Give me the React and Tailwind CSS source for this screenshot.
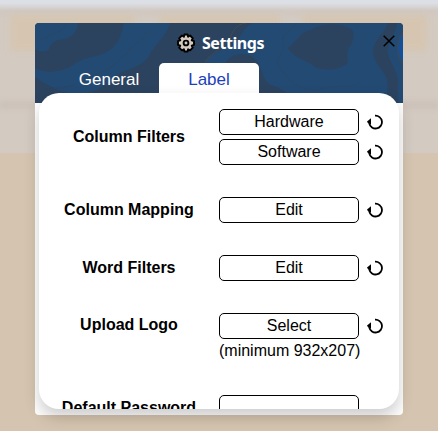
import React from "react";

function Contours() {
  return (
    <svg className="absolute inset-0 h-full w-full" viewBox="0 0 368 80" preserveAspectRatio="none" aria-hidden="true">
      <rect width="368" height="80" fill="#2b435f" />
      <g fill="#234a73">
        <path d="M0 0H43C42 9 37 15 29 16C20 17 16 19 14 26C11 30 5 28 0 27Z" />
        <path d="M89 0H135C132 12 122 20 116 29C111 40 103 43 92 47C79 51 75 61 61 67C41 77 17 66 0 54V45C12 52 29 48 38 42C51 32 64 35 75 27C86 18 86 11 89 0Z" />
        <path d="M170 40C176 31 184 27 195 24C206 20 204 8 217 0H353C350 10 338 17 338 29C338 39 347 45 351 54C355 63 350 72 352 80H255C258 70 245 65 234 61C226 55 228 43 220 36C212 28 196 30 190 40Z" />
        <path d="M362 0H368V80H364C361 74 365 63 362 52C359 42 352 36 353 26C354 16 362 10 362 0Z" />
      </g>
      <path d="M253 25C263 18 264 9 276 7C287 0 306 0 316 6C322 11 317 20 313 27C310 33 316 39 310 42C300 48 288 47 280 44C273 37 259 36 253 25Z" fill="#2b435f" />
      <g fill="none" stroke="#2b4763" strokeWidth="0.7">
        <path d="M263 0C254 9 246 10 248 20C250 33 236 36 246 46C254 56 259 66 280 67C299 62 311 65 325 60" />
        <path d="M3 18C14 11 26 11 32 0M4 62C28 73 52 55 67 49C87 41 95 21 115 9" />
      </g>
      <path d="M368 10C361 18 362 33 368 40Z" fill="#12509a" />
      <g fill="none" stroke="#49494b">
        <path d="M368 9C361 18 361 33 368 41M170 39C177 29 189 25 195 16C197 8 202 1 211 0" />
      </g>
    </svg>
  );
}

function Gear() {
  return (
    <svg className="h-5 w-5" viewBox="0 0 20 20" aria-hidden="true">
      <path
        d="M8.4 1.5h3.2l.5 2.2 2-1.2 2.8 2.8-1.2 2 2.3.8v3.8l-2.3.7 1.1 2.1-2.7 2.7-2-1.1-.5 2.2H8.4l-.5-2.2-2 1.1-2.7-2.7 1.1-2.1L2 11.9V8.1l2.3-.8-1.2-2 2.8-2.8 2 1.2Z"
        fill="#d4cac0"
        stroke="#000"
        strokeWidth="1.9"
        strokeLinejoin="round"
      />
      <circle cx="10" cy="10" r="2.4" fill="#d4cac0" stroke="#000" strokeWidth="1.9" />
    </svg>
  );
}

function ResetButton() {
  return (
    <button aria-label="Reset" className="h-4 w-4">
      <svg className="h-4 w-4" viewBox="0 0 16 16" aria-hidden="true">
        <path d="M8 1.7A6.4 6.4 0 1 1 2.3 9.5" fill="none" stroke="#000" strokeWidth="1.8" />
        <path d="M0 7.6L4 4.2V10.4L1.2 9.4Z" />
      </svg>
    </button>
  );
}

function Option({ label }) {
  return (
    <div className="flex items-center gap-2">
      <button className="h-[26px] w-[140px] rounded-[5px] border border-black leading-6">{label}</button>
      {label && <ResetButton />}
    </div>
  );
}

function Row({ title, options, note }) {
  return (
    <div className={note ? "flex items-start gap-4" : "flex items-center gap-4"}>
      <div className="w-[148px] shrink-0 text-center leading-6 font-bold whitespace-nowrap">{title}</div>
      <div className="flex flex-col gap-1">
        {options.map((o) => (
          <Option key={o} label={o} />
        ))}
        {note && <div className="-mt-1 h-6 leading-6 whitespace-nowrap">{note}</div>}
      </div>
    </div>
  );
}

export default function App() {
  return (
    <div className="relative h-[431px] w-[438px] overflow-hidden bg-[#d5c5b0] px-[35px] pt-[23px] font-['Liberation_Sans',Arial,sans-serif] text-base text-black">
      <div className="absolute inset-x-0 top-0 h-[153px] bg-linear-to-b from-[#dcdfe5] from-2% via-[#d0c8c1] via-7% to-[#d3cac1] to-12%">
        <div className="absolute top-[15px] left-[10px] h-[36px] w-[125px] bg-[#d6c5ae] opacity-80 blur-[3px]" />
        <div className="absolute top-[15px] right-[11px] h-[36px] w-[125px] bg-[#d6c5ae] opacity-80 blur-[3px]" />
        <div className="absolute top-[15px] left-[159px] h-[20px] w-[121px] bg-[#d6c5ae] opacity-80 blur-[3px]" />
        <div className="absolute inset-x-0 top-[101px] h-[8px] bg-[#ccc2bb] blur-[2px]" />
      </div>

      <div className="relative h-[392px] rounded bg-white">
        <header className="relative h-20 overflow-hidden rounded-t">
          <Contours />
          <div className="relative flex h-10 items-center justify-center gap-[6px] pl-[2px] text-white">
            <Gear />
            <h1 className="font-['Noto_Sans',sans-serif] text-base font-bold tracking-[-0.45px]">Settings</h1>
          </div>
          <button aria-label="Close" className="absolute top-3 right-2 h-3 w-3">
            <svg viewBox="0 0 12 12" className="h-3 w-3" aria-hidden="true">
              <path d="M.7.7L11.3 11.3M11.3.7L.7 11.3" stroke="#000" strokeWidth="1.5" />
            </svg>
          </button>
          <nav className="relative flex h-10 pl-6 text-[17px]">
            <button className="h-8 w-[100px] pt-px leading-8 text-white">General</button>
            <button className="h-10 w-[100px] rounded-t-[5px] bg-white pt-px pb-2 leading-8 text-[#1e40bd]">Label</button>
          </nav>
        </header>

        <main className="relative mx-1 -mt-[10px] h-[316px] overflow-hidden rounded-[20px] bg-white shadow-[0_8px_16px_rgba(0,0,0,0.2)]">
          <div className="flex flex-col gap-8 p-4">
            <Row title="Column Filters" options={["Hardware", "Software"]} />
            <Row title="Column Mapping" options={["Edit"]} />
            <Row title="Word Filters" options={["Edit"]} />
            <Row title="Upload Logo" options={["Select"]} note="(minimum 932x207)" />
            <Row title="Default Password" options={[""]} />
          </div>
        </main>
      </div>
    </div>
  );
}
